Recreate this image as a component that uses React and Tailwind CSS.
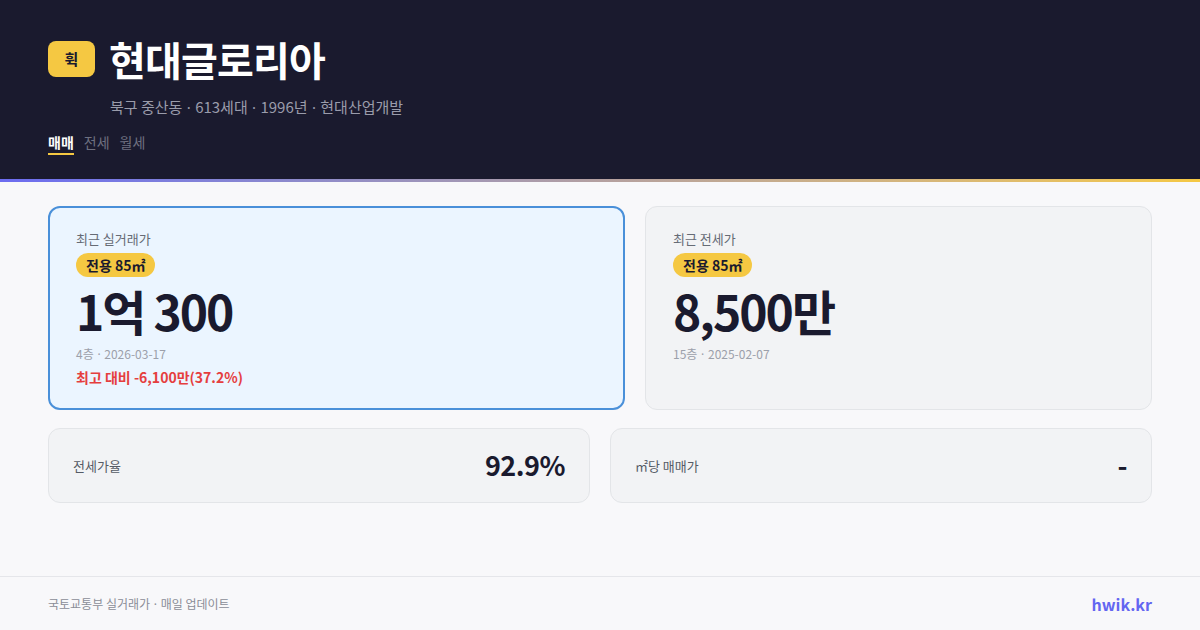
import React from 'react';

const font = { fontFamily: '"Noto Sans CJK KR", "Noto Sans", sans-serif' };

// narrow middle dot (the CJK font draws it full width)
const Dot = () => <span className="mx-[1px]" style={{ fontFamily: '"Noto Sans", sans-serif' }}>·</span>;

const Badge = () => (
  <span className="inline-flex items-center h-[24px] px-[10px] rounded-full bg-[#f5c842] text-[14px] font-bold text-[#1a1a2e] leading-none">
    전용 85㎡
  </span>
);

const StatCard = ({ label, value }) => (
  <div className="flex-1 h-[75px] flex items-center justify-between px-[24px] rounded-[12px] bg-[#f2f3f5] border border-[#e3e5e8]">
    <span className="text-[13px] text-[#555b66]">{label}</span>
    <span className="text-[27px] font-bold text-[#1a1a2e] tracking-[-0.5px]">{value}</span>
  </div>
);

export default function App() {
  return (
    <div style={font} className="w-[1200px] h-[630px] bg-[#f8f8fa] flex flex-col overflow-hidden">
      {/* Header */}
      <header className="bg-[#1a1a2e] h-[179px] px-[48px] pt-[35px]">
        <div className="flex items-center gap-[14px]">
          <div className="w-[47px] h-[36px] rounded-[8px] bg-[#f5c842] flex items-center justify-center text-[15px] font-bold text-[#1a1a2e]">
            휙
          </div>
          <h1 className="text-[40px] font-bold text-white leading-[48px] tracking-[-0.8px]">현대글로리아</h1>
        </div>
        <p className="ml-[62px] mt-[13px] text-[15px] text-[#9a9cab] leading-[22px]">
          북구 중산동 <Dot /> 613세대 <Dot /> 1996년 <Dot /> 현대산업개발
        </p>
        <nav className="flex gap-[10px] mt-[14px] text-[14px] leading-[20px]">
          <span className="text-white font-bold border-b-2 border-[#f5c842] pb-[1px]">매매</span>
          <span className="text-[#6e7080]">전세</span>
          <span className="text-[#6e7080]">월세</span>
        </nav>
      </header>
      <div className="h-[3px] bg-gradient-to-r from-[#6c6cf0] via-[#b4a0a0] to-[#f5c842]" />

      {/* Main */}
      <main className="flex-1 px-[48px] pt-[24px]">
        <div className="flex gap-[20px]">
          <div className="w-[577px] h-[204px] rounded-[12px] border-2 border-[#4a90d9] bg-[#ebf5ff] px-[26px] pt-[22px]">
            <div className="text-[13px] text-[#666b75] leading-[18px]">최근 실거래가</div>
            <div className="mt-[4px]"><Badge /></div>
            <div className="text-[48px] font-bold text-[#1a1a2e] leading-[60px] mt-[3px] tracking-[-2px]">1억 300</div>
            <div className="text-[12px] text-[#9ca0aa] leading-[18px] mt-[5px]">4층 <Dot /> 2026-03-17</div>
            <div className="text-[14px] font-semibold text-[#e53e3e] leading-[20px] mt-[3px]">최고 대비 -6,100만(37.2%)</div>
          </div>
          <div className="flex-1 h-[204px] rounded-[12px] border border-[#e3e5e8] bg-[#f2f3f5] px-[27px] pt-[23px]">
            <div className="text-[13px] text-[#666b75] leading-[18px]">최근 전세가</div>
            <div className="mt-[4px]"><Badge /></div>
            <div className="text-[48px] font-bold text-[#1a1a2e] leading-[60px] mt-[3px] tracking-[-2px]">8,500만</div>
            <div className="text-[12px] text-[#9ca0aa] leading-[18px] mt-[5px]">15층 <Dot /> 2025-02-07</div>
          </div>
        </div>
        <div className="flex gap-[20px] mt-[18px]">
          <StatCard label="전세가율" value="92.9%" />
          <StatCard label="㎡당 매매가" value="-" />
        </div>
      </main>

      {/* Footer */}
      <footer className="h-[54px] border-t border-[#e5e6ea] px-[48px] pt-[1px] flex items-center justify-between">
        <span className="text-[12px] text-[#8a8d97]">국토교통부 실거래가 <Dot /> 매일 업데이트</span>
        <span className="text-[16px] font-bold text-[#6366f1]">hwik.kr</span>
      </footer>
    </div>
  );
}
